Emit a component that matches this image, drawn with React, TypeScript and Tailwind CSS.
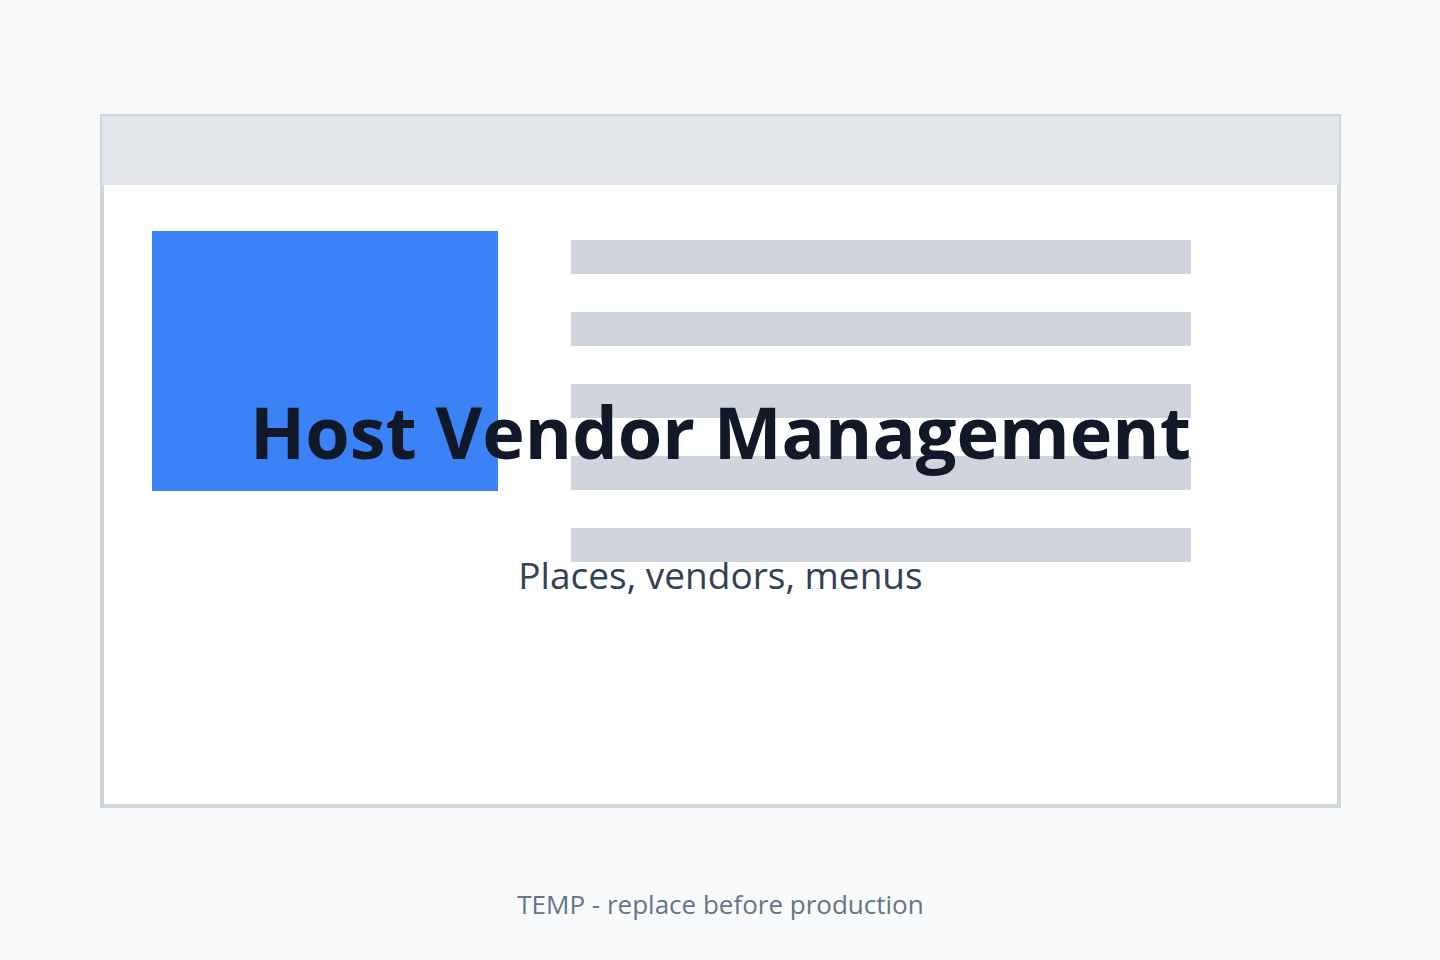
export default function App() {
  return (
    <main className="flex min-h-screen flex-col bg-[#f9fafc] pl-[100px] pr-[99px] pt-[114px] font-['Open_Sans',sans-serif]">
      <section className="relative flex h-[694px] flex-col border-4 border-[#d0d5dc] bg-white">
        <div className="-mx-0.5 -mt-0.5 h-[69px] shrink-0 bg-[#e4e7ec]" />
        <div className="flex pl-12 pr-[146px] pt-[46px]">
          <div className="h-[260px] w-1/3 shrink-0 bg-[#3b82f6]" />
          <div className="ml-[73px] mt-[9px] flex flex-1 flex-col gap-[38px]">
            {[0, 1, 2, 3, 4].map((row) => (
              <div key={row} className="h-[34px] bg-[#d0d5dd]" />
            ))}
          </div>
        </div>
        <div className="absolute inset-x-0 top-[265px] flex flex-col items-center text-center">
          <h1 className="whitespace-nowrap text-[72px] font-bold leading-[96px] text-[#111827]">Host Vendor Management</h1>
          <p className="mt-[70px] whitespace-nowrap text-[37px] leading-[52px] text-[#334155]">Places, vendors, menus</p>
        </div>
      </section>
      <p className="mt-[78px] text-center text-[26px] leading-[36px] text-[#64748b]">TEMP - replace before production</p>
    </main>
  );
}
